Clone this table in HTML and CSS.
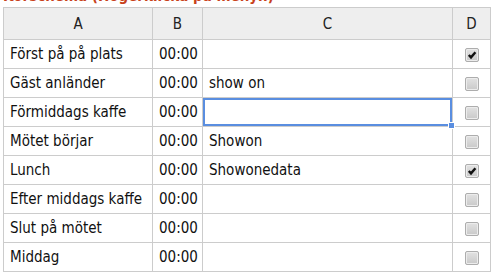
FILE: index.html
```html
<!DOCTYPE html>
<html lang="sv">
<head>
<meta charset="utf-8">
<title>Körschema</title>
<link rel="stylesheet" href="styles.css">
</head>
<body>
<div class="sheet">
  <h2 class="sheet-title">Körschema (Högerklicka på menyn)</h2>
  <table class="grid">
    <colgroup>
      <col class="col-a">
      <col class="col-b">
      <col class="col-c">
      <col class="col-d">
    </colgroup>
    <thead>
      <tr><th>A</th><th>B</th><th>C</th><th>D</th></tr>
    </thead>
    <tbody>
      <tr><td>Först på på plats</td><td>00:00</td><td></td><td class="chk"><span class="box on"><svg viewBox="0 0 10 10"><path d="M1.8 5 L4 7.4 L8.4 2.2" /></svg></span></td></tr>
      <tr><td>Gäst anländer</td><td>00:00</td><td>show on</td><td class="chk"><span class="box"></span></td></tr>
      <tr><td>Förmiddags kaffe</td><td>00:00</td><td class="current"><span class="fill-handle"></span></td><td class="chk"><span class="box"></span></td></tr>
      <tr><td>Mötet börjar</td><td>00:00</td><td>Showon</td><td class="chk"><span class="box"></span></td></tr>
      <tr><td>Lunch</td><td>00:00</td><td>Showonedata</td><td class="chk"><span class="box on"><svg viewBox="0 0 10 10"><path d="M1.8 5 L4 7.4 L8.4 2.2" /></svg></span></td></tr>
      <tr><td>Efter middags kaffe</td><td>00:00</td><td></td><td class="chk"><span class="box"></span></td></tr>
      <tr><td>Slut på mötet</td><td>00:00</td><td></td><td class="chk"><span class="box"></span></td></tr>
      <tr><td>Middag</td><td>00:00</td><td></td><td class="chk"><span class="box"></span></td></tr>
    </tbody>
  </table>
</div>
</body>
</html>
```

FILE: styles.css
```css
html, body {
  margin: 0;
  padding: 0;
  background: #fff;
}

.sheet {
  padding: 0 3px;
  font-family: "DejaVu Sans Condensed", "DejaVu Sans", sans-serif;
  font-size: 15px;
  color: #111;
}

/* heading sits mostly above the viewport; only its lower edge shows */
.sheet-title {
  margin: -12px 0 0 0;
  height: 19px;
  line-height: 17px;
  font-size: 15px;
  font-weight: bold;
  color: #c8421b;
  overflow: hidden;
  white-space: nowrap;
}

.grid {
  border-collapse: collapse;
  table-layout: fixed;
  width: 487px;
}

.col-a { width: 149px; }
.col-b { width: 50px; }
.col-c { width: 250px; }
.col-d { width: 38px; }

.grid th,
.grid td {
  border: 1px solid #ccc;
  padding: 0 0 0 6px;
  height: 28px;
  white-space: nowrap;
  overflow: hidden;
  text-align: left;
}

.grid th {
  height: 31px;
  background: #eeeeee;
  font-weight: normal;
  text-align: center;
  color: #222;
  padding: 0;
}

.grid td.chk {
  text-align: center;
  padding: 0;
}

.grid td.current {
  position: relative;
  overflow: visible;
  box-shadow: inset 0 0 0 2px #5a8ee0;
}

.fill-handle {
  position: absolute;
  right: -3px;
  bottom: -3px;
  width: 5px;
  height: 5px;
  background: #5a8ee0;
  border: 1px solid #fff;
}

.box {
  display: inline-block;
  vertical-align: middle;
  width: 12px;
  height: 12px;
  border: 1px solid #adadad;
  border-radius: 2px;
  background: linear-gradient(#e2e2e2, #c9c9c9);
  box-shadow: inset 0 0 0 1px #ececec;
  position: relative;
}

.box svg {
  position: absolute;
  left: 1px;
  top: 1px;
  width: 10px;
  height: 10px;
}

.box svg path {
  fill: none;
  stroke: #111;
  stroke-width: 2.4;
}
```
